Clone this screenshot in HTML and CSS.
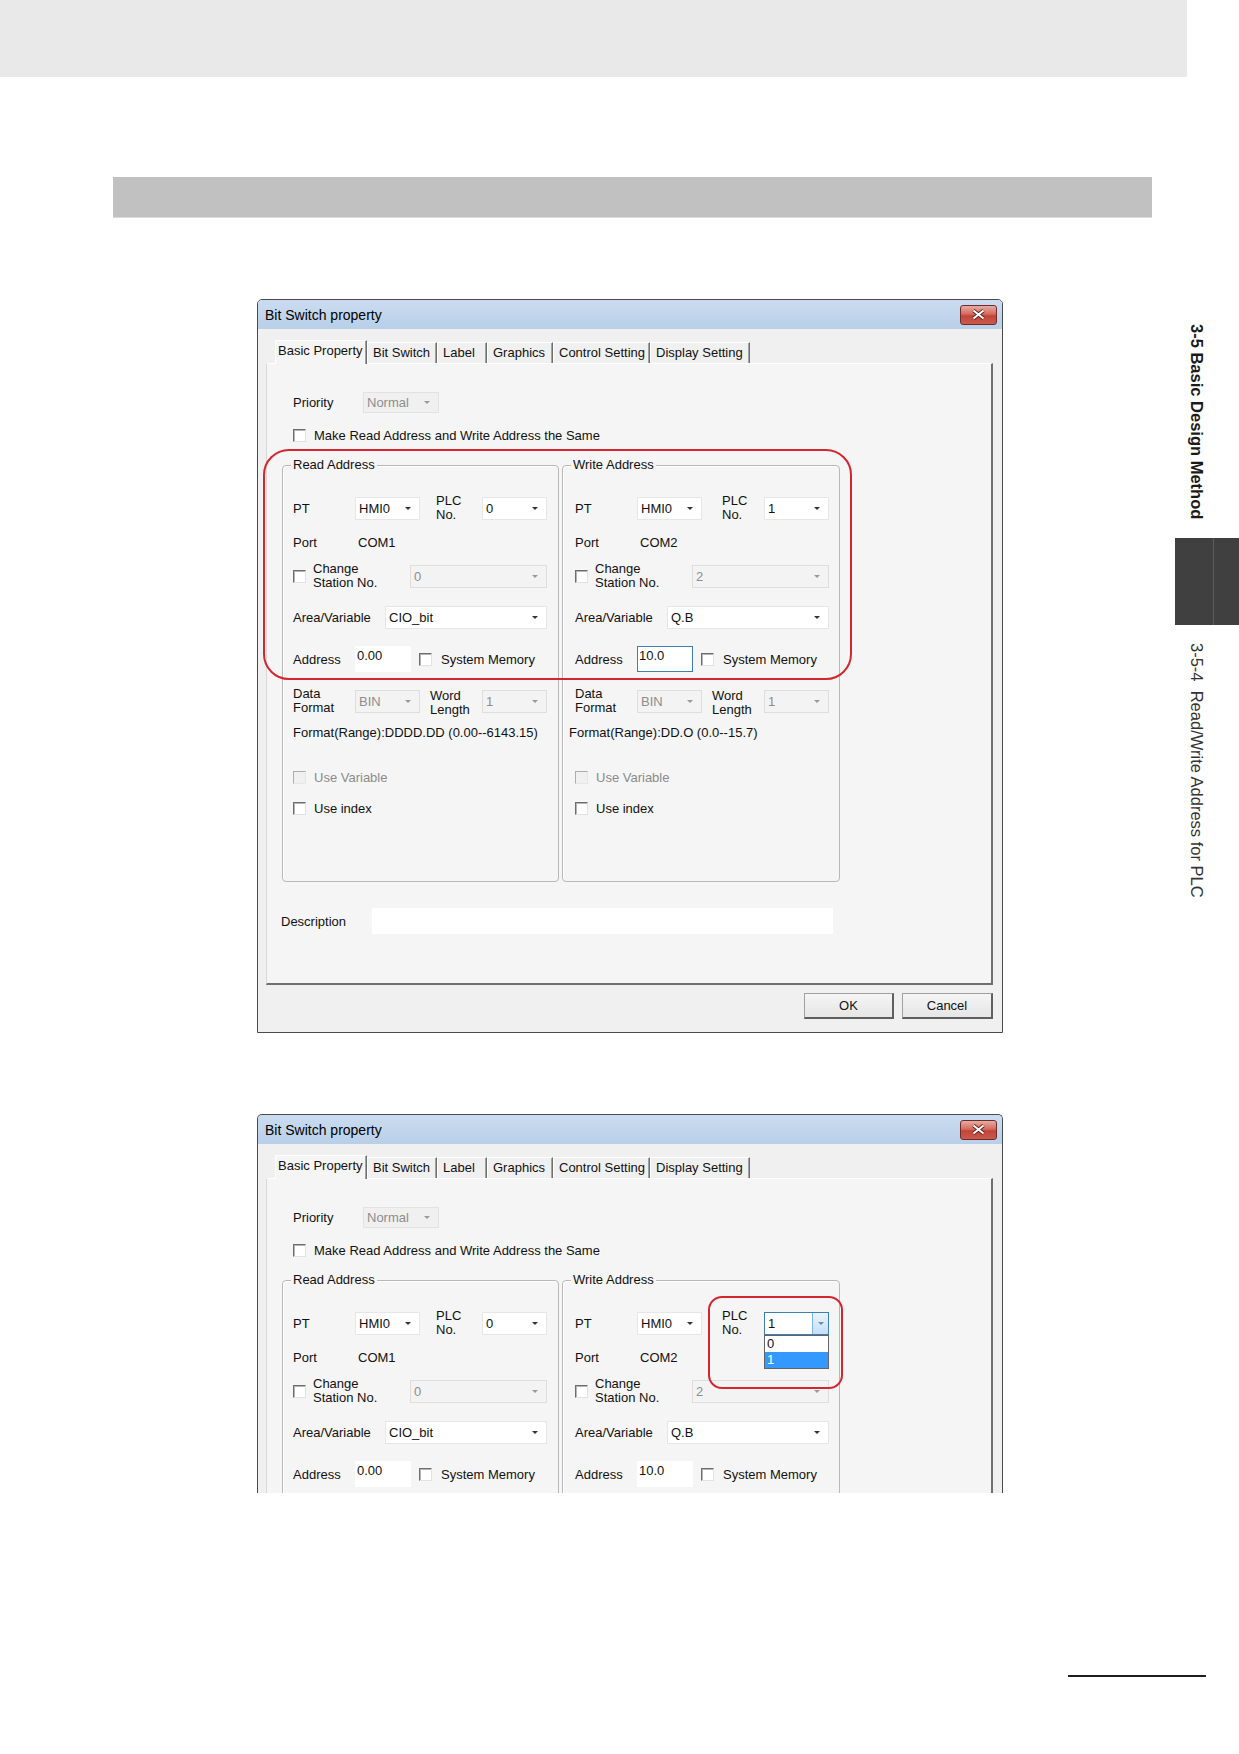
FILE: index.html
```html
<!DOCTYPE html>
<html lang="en">
<head>
    <meta charset="UTF-8">
    <title>3-5-4 Read/Write Address for PLC</title>
    <link rel="stylesheet" href="styles.css">
</head>
<body>
<div id="page">
    <div class="head-band"></div>
    <div class="section-bar"></div>

    <!-- first dialog: read / write address groups -->
    <div class="dialog">
        <div class="title">
            <span>Bit Switch property</span>
            <span class="close">
                <svg width="15" height="11" viewBox="0 0 15 11"><path d="M2.5 1.5L12.5 9.5M12.5 1.5L2.5 9.5" stroke="#5b1e1a" stroke-width="3.6" fill="none"/><path d="M2.5 1.5L12.5 9.5M12.5 1.5L2.5 9.5" stroke="#fff" stroke-width="2" fill="none"/></svg>
            </span>
        </div>
        <div class="body">
            <ul class="tabs">
                <li class="selected">Basic Property</li>
                <li>Bit Switch</li>
                <li>Label</li>
                <li>Graphics</li>
                <li>Control Setting</li>
                <li>Display Setting</li>
            </ul>
            <div class="panel">
                <div class="prio">
                    <span class="lbl w70">Priority</span>
                    <span class="combo off w76">Normal</span>
                </div>
                <div class="opt"><span class="check"></span><span class="opt-text">Make Read Address and Write Address the Same</span></div>
                <div class="groups">
                    <div class="group">
                        <span class="caption">Read Address</span>
                        <div class="row">
                            <span class="lbl w62">PT</span>
                            <span class="combo w65">HMI0</span>
                            <span class="lbl two plc">PLC<br>No.</span>
                            <span class="combo w65">0</span>
                        </div>
                        <div class="row">
                            <span class="lbl w65">Port</span>
                            <span>COM1</span>
                        </div>
                        <div class="row">
                            <span class="check"></span>
                            <span class="lbl two station">Change<br>Station No.</span>
                            <span class="combo off w137">0</span>
                        </div>
                        <div class="row sep">
                            <span class="lbl w92">Area/Variable</span>
                            <span class="combo w162">CIO_bit</span>
                        </div>
                        <div class="row addr sep">
                            <span class="lbl w62">Address</span>
                            <span class="field">0.00</span>
                            <span class="check gap"></span>
                            <span class="sys">System Memory</span>
                        </div>
                        <div class="row sep">
                            <span class="lbl two w62">Data<br>Format</span>
                            <span class="combo off w65">BIN</span>
                            <span class="lbl two word">Word<br>Length</span>
                            <span class="combo off w65">1</span>
                        </div>
                        <div class="row tight">Format(Range):DDDD.DD (0.00--6143.15)</div>
                        <div class="row far"><span class="check off"></span><span class="dim">Use Variable</span></div>
                        <div class="row tight"><span class="check"></span><span class="check-text">Use index</span></div>
                    </div>
                    <div class="group write">
                        <span class="caption">Write Address</span>
                        <div class="row">
                            <span class="lbl w62">PT</span>
                            <span class="combo w65">HMI0</span>
                            <span class="lbl two plc">PLC<br>No.</span>
                            <span class="combo w65">1</span>
                        </div>
                        <div class="row">
                            <span class="lbl w65">Port</span>
                            <span>COM2</span>
                        </div>
                        <div class="row">
                            <span class="check"></span>
                            <span class="lbl two station">Change<br>Station No.</span>
                            <span class="combo off w137">2</span>
                        </div>
                        <div class="row sep">
                            <span class="lbl w92">Area/Variable</span>
                            <span class="combo w162">Q.B</span>
                        </div>
                        <div class="row addr sep">
                            <span class="lbl w62">Address</span>
                            <span class="field focus">10.0</span>
                            <span class="check gap"></span>
                            <span class="sys">System Memory</span>
                        </div>
                        <div class="row sep">
                            <span class="lbl two w62">Data<br>Format</span>
                            <span class="combo off w65">BIN</span>
                            <span class="lbl two word">Word<br>Length</span>
                            <span class="combo off w65">1</span>
                        </div>
                        <div class="row tight range">Format(Range):DD.O (0.0--15.7)</div>
                        <div class="row far"><span class="check off"></span><span class="dim">Use Variable</span></div>
                        <div class="row tight"><span class="check"></span><span class="check-text">Use index</span></div>
                    </div>
                </div>
                <div class="desc">
                    <span class="lbl w91">Description</span>
                    <span class="field long"></span>
                </div>
            </div>
            <div class="buttons">
                <span class="btn">OK</span>
                <span class="btn cancel">Cancel</span>
            </div>
        </div>
        <div class="ring rw"></div>
    </div>

    <!-- second dialog: PLC No. list opened -->
    <div class="dialog cut">
        <div class="title">
            <span>Bit Switch property</span>
            <span class="close">
                <svg width="15" height="11" viewBox="0 0 15 11"><path d="M2.5 1.5L12.5 9.5M12.5 1.5L2.5 9.5" stroke="#5b1e1a" stroke-width="3.6" fill="none"/><path d="M2.5 1.5L12.5 9.5M12.5 1.5L2.5 9.5" stroke="#fff" stroke-width="2" fill="none"/></svg>
            </span>
        </div>
        <div class="body">
            <ul class="tabs">
                <li class="selected">Basic Property</li>
                <li>Bit Switch</li>
                <li>Label</li>
                <li>Graphics</li>
                <li>Control Setting</li>
                <li>Display Setting</li>
            </ul>
            <div class="panel">
                <div class="prio">
                    <span class="lbl w70">Priority</span>
                    <span class="combo off w76">Normal</span>
                </div>
                <div class="opt"><span class="check"></span><span class="opt-text">Make Read Address and Write Address the Same</span></div>
                <div class="groups">
                    <div class="group">
                        <span class="caption">Read Address</span>
                        <div class="row">
                            <span class="lbl w62">PT</span>
                            <span class="combo w65">HMI0</span>
                            <span class="lbl two plc">PLC<br>No.</span>
                            <span class="combo w65">0</span>
                        </div>
                        <div class="row">
                            <span class="lbl w65">Port</span>
                            <span>COM1</span>
                        </div>
                        <div class="row">
                            <span class="check"></span>
                            <span class="lbl two station">Change<br>Station No.</span>
                            <span class="combo off w137">0</span>
                        </div>
                        <div class="row sep">
                            <span class="lbl w92">Area/Variable</span>
                            <span class="combo w162">CIO_bit</span>
                        </div>
                        <div class="row addr sep">
                            <span class="lbl w62">Address</span>
                            <span class="field">0.00</span>
                            <span class="check gap"></span>
                            <span class="sys">System Memory</span>
                        </div>
                    </div>
                    <div class="group write">
                        <span class="caption">Write Address</span>
                        <div class="row">
                            <span class="lbl w62">PT</span>
                            <span class="combo w65">HMI0</span>
                            <span class="lbl two plc">PLC<br>No.</span>
                            <span class="combo w65 open">1<span class="pick"></span>
                                <span class="list"><span>0</span><span class="on">1</span></span>
                            </span>
                        </div>
                        <div class="row">
                            <span class="lbl w65">Port</span>
                            <span>COM2</span>
                        </div>
                        <div class="row">
                            <span class="check"></span>
                            <span class="lbl two station">Change<br>Station No.</span>
                            <span class="combo off w137">2</span>
                        </div>
                        <div class="row sep">
                            <span class="lbl w92">Area/Variable</span>
                            <span class="combo w162">Q.B</span>
                        </div>
                        <div class="row addr sep">
                            <span class="lbl w62">Address</span>
                            <span class="field">10.0</span>
                            <span class="check gap"></span>
                            <span class="sys">System Memory</span>
                        </div>
                    </div>
                </div>
            </div>
        </div>
        <div class="ring plc-ring"></div>
    </div>

    <div class="foot-rule"></div>

    <div class="side">
        <div class="side-title">3-5 Basic Design Method</div>
        <div class="thumb"></div>
        <div class="side-sub">3-5-4&nbsp;&nbsp;Read/Write Address for PLC</div>
    </div>
</div>
</body>
</html>
```

FILE: styles.css
```css
*{
    margin: 0;
    padding: 0;
    box-sizing: border-box;
}
ul{
    list-style: none;
}
body{
    background-color: #fff;
    font-family: "Liberation Sans", Arial, sans-serif;
    font-size: 13px;
    color: #111;
}
#page{
    position: relative;
    width: 1239px;
    height: 1754px;
    overflow: hidden;
}
.head-band{
    width: 1187px;
    height: 77px;
    background-color: #e9e9e9;
}
.section-bar{
    width: 1039px;
    height: 41px;
    margin: 100px 0 0 113px;
    background-color: #c1c1c1;
    border-bottom: 1px solid #dadada;
}

/* window */
.dialog{
    position: relative;
    width: 746px;
    height: 734px;
    margin: 81px 0 0 257px;
    background-color: #f0f0f0;
    border: 1px solid #4b4b4b;
    border-radius: 5px 5px 0 0;
}
.dialog.cut{
    height: 379px;
    border-bottom: 0;
    overflow: hidden;
}
.title{
    display: flex;
    justify-content: space-between;
    align-items: center;
    height: 29px;
    padding: 0 5px 0 7px;
    font-size: 14px;
    color: #000;
    background: linear-gradient(#cadcf0, #b9cfe8);
    border-radius: 4px 4px 0 0;
}
.close{
    display: flex;
    align-items: center;
    justify-content: center;
    width: 37px;
    height: 20px;
    border: 1px solid #6e2c28;
    border-radius: 3px;
    background: linear-gradient(#e6aca2, #d56a5e 45%, #c2443a 55%, #cb5a4e);
}
.body{
    padding: 11px 8px 0 8px;
}

/* tab strip */
.tabs{
    display: flex;
    align-items: flex-end;
    height: 23px;
    padding-left: 9px;
}
.tabs li{
    height: 21px;
    line-height: 20px;
    padding-left: 5px;
    white-space: nowrap;
    border-top: 1px solid #fff;
    border-left: 1px solid #fff;
    border-right: 1px solid #6e6e6e;
    box-shadow: inset -1px 0 #a3a3a3;
}
.tabs .selected{
    position: relative;
    z-index: 1;
    height: 24px;
    line-height: 19px;
    padding-left: 2px;
    margin-bottom: -1px;
    background-color: #f5f5f5;
}
.tabs li:nth-child(1){ width: 92px; }
.tabs li:nth-child(2){ width: 70px; }
.tabs li:nth-child(3){ width: 50px; }
.tabs li:nth-child(4){ width: 66px; }
.tabs li:nth-child(5){ width: 97px; }
.tabs li:nth-child(6){ width: 100px; }

.panel{
    width: 727px;
    height: 622px;
    padding: 28px 0 0 14px;
    background-color: #f5f5f5;
    border-top: 1px solid #fff;
    border-left: 1px solid #d8d8d8;
    border-right: 2px solid #6f6f6f;
    border-bottom: 2px solid #6f6f6f;
}
.prio{
    display: flex;
    align-items: center;
    height: 21px;
    margin-left: 12px;
}
.opt{
    display: flex;
    align-items: center;
    height: 16px;
    margin: 14px 0 0 12px;
}
.opt-text{
    margin-left: 8px;
}
.groups{
    display: flex;
    gap: 3px;
    margin: 22px 0 0 1px;
}
.group{
    position: relative;
    width: 277px;
    height: 417px;
    padding: 30px 0 0 10px;
    border: 1px solid #b8b8b8;
    border-radius: 4px;
    box-shadow: inset 1px 1px 0 #fff;
}
.group.write{
    width: 278px;
    padding-left: 12px;
}
.group.write .plc{
    width: 42px;
    margin-left: 20px;
}
.caption{
    position: absolute;
    top: -9px;
    left: 8px;
    padding: 0 2px;
    line-height: 16px;
    background-color: #f5f5f5;
}
.row{
    display: flex;
    align-items: center;
    height: 24px;
    white-space: nowrap;
}
.row + .row{
    margin-top: 10px;
}
.row.sep{
    margin-top: 17px;
}
.row.far{
    margin-top: 21px;
}
.row.tight{
    margin-top: 7px;
}
.row.addr{
    height: 26px;
}
.group.write .range{
    margin-left: -6px;
}

.lbl{
    flex: none;
}
.lbl.two{
    line-height: 14px;
}
.w62{ width: 62px; }
.w65{ width: 65px; }
.w70{ width: 70px; }
.w76{ width: 76px; }
.w91{ width: 91px; }
.w92{ width: 92px; }
.w137{ width: 137px; }
.w162{ width: 162px; }
.plc{
    width: 46px;
    margin-left: 16px;
}
.word{
    width: 52px;
    margin-left: 10px;
    padding-top: 3px;
}
.station{
    width: 97px;
    margin-left: 7px;
}
.sys{
    margin-left: 9px;
}
.check-text,
.dim{
    margin-left: 8px;
}
.dim{
    color: #8b8b8b;
}

/* controls */
.combo{
    flex: none;
    display: flex;
    align-items: center;
    height: 23px;
    padding: 0 8px 0 3px;
    background-color: #fff;
    border: 1px solid #e6e6e6;
}
.combo::after{
    content: "";
    margin-left: auto;
    border-left: 3px solid transparent;
    border-right: 3px solid transparent;
    border-top: 3px solid #333;
}
.combo.off{
    color: #8d8d8d;
    background-color: #f3f3f3;
    border-color: #dedede;
}
.combo.off::after{
    border-top-color: #9a9a9a;
}
.prio .combo{
    height: 21px;
    border-color: #e2e2e2;
    background-color: #f0f0f0;
}
.combo.open{
    position: relative;
    padding-right: 0;
    border-color: #3c7fb1;
}
.combo.open::after{
    display: none;
}
.pick{
    display: flex;
    align-items: center;
    justify-content: center;
    width: 16px;
    height: 21px;
    margin-left: auto;
    background: linear-gradient(#e9f4fe, #c3dff9);
    border-left: 1px solid #7fb4e7;
}
.pick::after{
    content: "";
    border-left: 3px solid transparent;
    border-right: 3px solid transparent;
    border-top: 3px solid #6d8aa6;
}
.list{
    position: absolute;
    top: 22px;
    left: -1px;
    width: 65px;
    background-color: #fff;
    border: 1px solid #646464;
}
.list span{
    display: block;
    height: 16px;
    line-height: 16px;
    padding-left: 2px;
}
.list .on{
    color: #fff;
    background-color: #3399ff;
}
.field{
    flex: none;
    width: 56px;
    height: 26px;
    padding: 1px 2px;
    line-height: 17px;
    background-color: #fff;
}
.field.focus{
    padding: 0 1px;
    border: 1px solid #3c7fb1;
}
.field.long{
    width: 461px;
}
.check{
    flex: none;
    width: 13px;
    height: 13px;
    background-color: #fff;
    border: 1px solid;
    border-color: #6d6d6d #e2e2e2 #e2e2e2 #6d6d6d;
    box-shadow: inset 1px 1px 0 #b4b4b4;
}
.check.off{
    background-color: #f0f0f0;
    border-color: #adadad #e6e6e6 #e6e6e6 #adadad;
    box-shadow: none;
}
.check.gap{
    margin-left: 8px;
}
.desc{
    display: flex;
    align-items: center;
    height: 26px;
    margin-top: 26px;
}
.buttons{
    display: flex;
    justify-content: flex-end;
    gap: 8px;
    margin-top: 8px;
    padding-right: 1px;
}
.btn{
    display: flex;
    align-items: center;
    justify-content: center;
    width: 90px;
    height: 26px;
    background: linear-gradient(#f5f5f5, #e6e6e6);
    border: 1px solid #a0a0a0;
    border-right: 2px solid #5f5f5f;
    border-bottom: 2px solid #5f5f5f;
}
.btn.cancel{
    width: 91px;
}

/* red marks */
.ring{
    position: absolute;
    border: 2px solid #d3262f;
}
.ring.rw{
    left: 5px;
    top: 149px;
    width: 589px;
    height: 231px;
    border-radius: 26px;
}
.ring.plc-ring{
    left: 450px;
    top: 181px;
    width: 135px;
    height: 93px;
    border-radius: 14px;
}

.foot-rule{
    width: 138px;
    height: 2px;
    margin: 182px 0 0 1068px;
    background-color: #1e1e1e;
}

/* chapter index on the right edge */
.side{
    position: absolute;
    top: 324px;
    left: 1175px;
    width: 64px;
    display: flex;
    flex-direction: column;
    align-items: flex-start;
}
.side-title,
.side-sub{
    writing-mode: vertical-rl;
    width: 19px;
    font-size: 16.5px;
    line-height: 19px;
    margin-left: 12px;
    white-space: nowrap;
}
.side-title{
    height: 214px;
    font-weight: bold;
    color: #1a1a1a;
}
.thumb{
    align-self: stretch;
    height: 87px;
    background-color: #404040;
    background-image: linear-gradient(90deg, transparent 38px, #5c5c5c 38px, #5c5c5c 39px, transparent 39px);
}
.side-sub{
    margin-top: 18px;
    color: #333;
}
```
